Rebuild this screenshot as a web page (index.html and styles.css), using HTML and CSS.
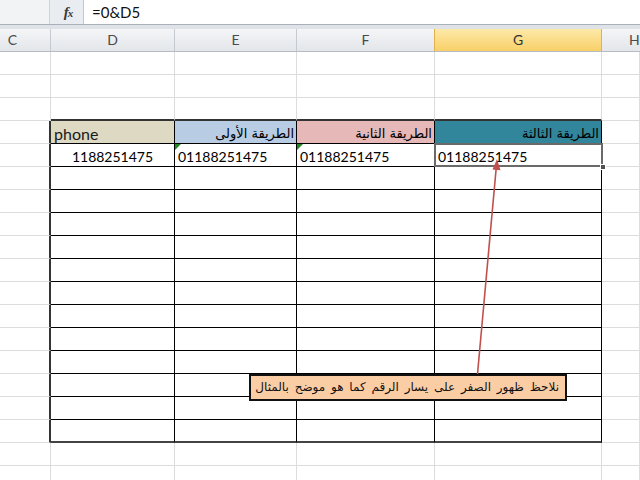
FILE: index.html
```html
<!DOCTYPE html>
<html lang="ar">
<head>
<meta charset="utf-8">
<title>Excel</title>
<link rel="stylesheet" href="styles.css">
</head>
<body>
<div class="app">
  <div class="fbar">
    <div class="namebox"></div>
    <div class="fxbox"><span class="fx">f<span class="fxx">x</span></span></div>
    <div class="finput">=0&amp;D5</div>
  </div>
  <div class="strip"></div>
  <div class="sheet">
    <div class="colhead">
      <div class="ch chc">C</div>
      <div class="ch">D</div>
      <div class="ch">E</div>
      <div class="ch">F</div>
      <div class="ch sel">G</div>
      <div class="ch chh">H</div>
    </div>
    <div class="row"><div></div><div></div><div></div><div></div><div></div><div></div></div>
    <div class="row"><div></div><div></div><div></div><div></div><div></div><div></div></div>
    <div class="row above"><div></div><div></div><div></div><div></div><div></div><div></div></div>
    <div class="row tbl">
      <div></div>
      <div class="hd hd1 ltr">phone</div>
      <div class="hd hd2 ar">الطريقة الأولى</div>
      <div class="hd hd3 ar">الطريقة الثانية</div>
      <div class="hd hd4 ar">الطريقة الثالثة</div>
      <div></div>
    </div>
    <div class="row tbl">
      <div></div>
      <div class="num center">1188251475</div>
      <div class="num flag">01188251475</div>
      <div class="num flag">01188251475</div>
      <div class="num active">01188251475<span class="handle"></span></div>
      <div></div>
    </div>
    <div class="row tbl"><div></div><div></div><div></div><div></div><div></div><div></div></div>
    <div class="row tbl"><div></div><div></div><div></div><div></div><div></div><div></div></div>
    <div class="row tbl"><div></div><div></div><div></div><div></div><div></div><div></div></div>
    <div class="row tbl"><div></div><div></div><div></div><div></div><div></div><div></div></div>
    <div class="row tbl"><div></div><div></div><div></div><div></div><div></div><div></div></div>
    <div class="row tbl"><div></div><div></div><div></div><div></div><div></div><div></div></div>
    <div class="row tbl"><div></div><div></div><div></div><div></div><div></div><div></div></div>
    <div class="row tbl"><div></div><div></div><div></div><div></div><div></div><div></div></div>
    <div class="row tbl"><div></div><div></div><div></div><div></div><div></div><div></div></div>
    <div class="row tbl"><div></div><div></div><div></div><div></div><div></div><div></div></div>
    <div class="row tbl"><div></div><div></div><div></div><div></div><div></div><div></div></div>
    <div class="row tbl last"><div></div><div></div><div></div><div></div><div></div><div></div></div>
    <div class="row"><div></div><div></div><div></div><div></div><div></div><div></div></div>
    <div class="row"><div></div><div></div><div></div><div></div><div></div><div></div></div>

    <svg class="arrow" width="640" height="451" viewBox="0 0 640 451" xmlns="http://www.w3.org/2000/svg">
      <line x1="477.5" y1="345" x2="496.2" y2="139" stroke="#c0504d" stroke-width="1.6"/>
      <polygon points="497,130 492.5,140.5 500.5,141.2" fill="#c0504d"/>
    </svg>
    <div class="callout">نلاحظ ظهور الصفر على يسار الرقم كما هو موضح بالمثال</div>
  </div>
</div>
</body>
</html>
```
FILE: styles.css
```css
* { box-sizing: border-box; }
html, body { margin: 0; padding: 0; }
body {
  width: 640px;
  height: 480px;
  overflow: hidden;
  background: #ffffff;
  font-family: Lato, "DejaVu Sans", sans-serif;
  color: #000;
}
.app { width: 640px; height: 480px; overflow: hidden; }

.fbar {
  display: flex;
  height: 25px;
  background: #e9ecf0;
  border-bottom: 1px solid #a9b1bb;
}
.namebox {
  width: 50px;
  background: #f1f3f5;
  border-right: 1px solid #cfd3d8;
}
.fxbox {
  width: 33px;
  display: flex;
  align-items: center;
  justify-content: center;
  padding-left: 3px;
}
.fx {
  font-family: "Liberation Serif", serif;
  font-style: italic;
  font-weight: bold;
  font-size: 15px;
  color: #3a3a3a;
  letter-spacing: -1px;
}
.fxx { font-size: 11px; }
.finput {
  flex: 1;
  background: #ffffff;
  border-left: 1px solid #c4c9cf;
  padding-left: 8px;
  font-size: 15px;
  line-height: 24px;
  color: #111;
}
.strip {
  height: 4px;
  background: #dfe3e8;
}

.sheet { position: relative; }

.colhead, .row {
  display: grid;
  grid-template-columns: 51px 124px 122px 138px 167px 38px;
  height: 23px;
}
.colhead {
  background: linear-gradient(#f4f5f7, #e3e6ea);
  border-bottom: 1px solid #b5bcc5;
  overflow: hidden;
}
.ch {
  border-right: 1px solid #c5cad0;
  text-align: center;
  font-size: 14px;
  line-height: 22px;
  color: #4a4a4a;
}
.chc { padding-right: 25px; }
.chh { text-align: left; padding-left: 27px; border-right: 0; }
.ch.sel {
  background: linear-gradient(#fde9a8, #f8d068);
  border-left: 1px solid #e2b04e;
  border-right: 1px solid #e2b04e;
  border-bottom: 1px solid #e2b04e;
  color: #333;
  margin-left: -1px;
}

.row > div {
  border-right: 1px solid #dadcdd;
  border-bottom: 1px solid #dadcdd;
  position: relative;
  font-size: 14px;
  line-height: 15px;
  padding: 0 3px 2px 3px;
  display: flex;
  align-items: flex-end;
  white-space: nowrap;
}
.above > div:nth-child(n+2):nth-child(-n+5) {
  border-bottom: 2px solid #333;
}
.tbl > div:nth-child(1) {
  border-right: 2px solid #333;
}
.tbl > div:nth-child(n+2):nth-child(-n+5) {
  border-right: 1px solid #000;
  border-bottom: 1px solid #000;
}
.tbl > div:nth-child(5) {
  border-right: 2px solid #333;
}
.tbl.last > div:nth-child(n+2):nth-child(-n+5) {
  border-bottom: 2px solid #444;
}

.hd.hd1 { background: #ddd9c3; }
.hd.hd2 { background: #b8cce4; }
.hd.hd3 { background: #e6b8b7; }
.hd.hd4 { background: #31869b; }
.row > .ltr { justify-content: flex-start; font-size: 16px; color: #1a1a1a; }
.row > .ar {
  direction: rtl;
  justify-content: flex-start;
  font-family: "DejaVu Sans", sans-serif;
  font-size: 13px;
  padding-right: 2px;
}
.num { justify-content: flex-start; }
.num.center { justify-content: center; }

.flag::before {
  content: "";
  position: absolute;
  left: 0;
  top: 0;
  border-top: 6px solid #1f8a1f;
  border-right: 6px solid transparent;
}
.active::after {
  content: "";
  position: absolute;
  left: -1px;
  top: -1px;
  right: -2px;
  bottom: -1px;
  border: 2px solid #6a6a6a;
  z-index: 2;
}
.handle {
  position: absolute;
  right: -5px;
  bottom: -4px;
  width: 6px;
  height: 6px;
  background: #505050;
  border: 1px solid #ffffff;
  z-index: 3;
}

.arrow {
  position: absolute;
  left: 0;
  top: 0;
  pointer-events: none;
  z-index: 4;
}
.callout {
  position: absolute;
  left: 249px;
  top: 345px;
  width: 318px;
  height: 27px;
  background: #fbcda5;
  border: 2px solid #111;
  direction: rtl;
  font-family: "DejaVu Sans", sans-serif;
  font-size: 12px;
  word-spacing: 2px;
  line-height: 23px;
  padding-right: 6px;
  color: #111;
  white-space: nowrap;
  z-index: 5;
}
```
